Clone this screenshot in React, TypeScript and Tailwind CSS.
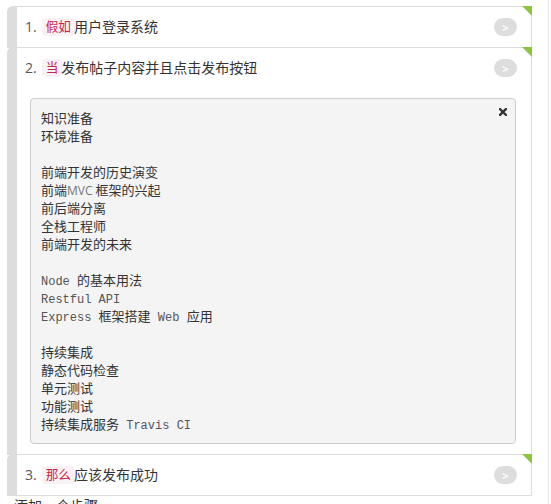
const Badge = ({ children }: { children: React.ReactNode }): JSX.Element => (
    <span className="inline-block px-[4px] rounded-[4px] bg-[#f9f2f4] text-[#c7254e] text-[12.6px] leading-[18px]">
        {children}
    </span>
);

const Corner = (): JSX.Element => (
    <svg className="absolute -top-px -right-px" width="10" height="10" viewBox="0 0 10 10">
        <polygon points="0,0 10,0 10,10" fill="#8cc63f" />
    </svg>
);

const Next = (): JSX.Element => (
    <span className="ml-auto flex items-center justify-center w-[23px] h-[18px] rounded-full bg-[#dddddd] text-white text-[11px] font-bold leading-none">
        &gt;
    </span>
);

const Mono = ({ children }: { children: React.ReactNode }): JSX.Element => (
    <span className="text-[12px] leading-[18px] text-[#555]" style={{ fontFamily: '"Liberation Mono", monospace' }}>{children}</span>
);

// each line of the pre block keeps a fixed 18px height, mixed fonts would grow it otherwise
const Line = ({ children }: { children?: React.ReactNode }): JSX.Element => (
    <div className="h-[18px] leading-[18px] whitespace-pre overflow-visible">{children ?? ' '}</div>
);

type Step = { n: number; kw: string; text: string };

const Row = ({ step }: { step: Step }): JSX.Element => (
    <div className="flex items-center h-[40px] pl-[8px] pr-[14px] text-[14px] leading-[20px]">
        <span className="text-[#555] mr-[5px]">{step.n}.</span>
        <Badge>{step.kw}</Badge>
        <span className="text-[#333] -ml-px">{step.text}</span>
        <Next />
    </div>
);

const App = (): JSX.Element => {
    const steps: Step[] = [
        { n: 1, kw: '假如', text: '用户登录系统' },
        { n: 2, kw: '当', text: '发布帖子内容并且点击发布按钮' },
        { n: 3, kw: '那么', text: '应该发布成功' },
    ];

    return (
        <div
            className="w-[549px] h-[504px] overflow-hidden border-r border-[#e6e6e6] bg-white pt-[6px] pl-[7px]"
            style={{ fontFamily: '"Open Sans", "Noto Sans CJK SC", sans-serif' }}
        >
            <ol className="w-[525px]">
                <li className="relative bg-white border border-[#dddddd] border-l-[10px] rounded-tl-[6px]">
                    <Row step={steps[0]} />
                    <Corner />
                </li>
                <li className="relative -mt-px bg-white border border-[#dddddd] border-l-[10px] rounded-tl-[6px] pb-[10px]">
                    <Row step={steps[1]} />
                    <Corner />
                    <div
                        className="relative mt-[10px] ml-[13px] mr-[15px] px-[10px] py-[10px] bg-[#f4f4f4] border border-[#cccccc] rounded-[4px] text-[13px] leading-[18px] text-[#333]"
                        style={{ fontFamily: '"Noto Sans CJK SC", sans-serif' }}
                    >
                        <svg className="absolute top-[9px] right-[8px]" width="8" height="8" viewBox="0 0 8 8">
                            <path d="M1 1 L7 7 M7 1 L1 7" stroke="#333" strokeWidth="2.4" strokeLinecap="square" />
                        </svg>
                        <Line>知识准备</Line>
                        <Line>环境准备</Line>
                        <Line />
                        <Line>前端开发的历史演变</Line>
                        <Line>前端<span className="text-[12px] text-[#777]" style={{ fontFamily: '"Open Sans", sans-serif' }}>MVC</span> 框架的兴起</Line>
                        <Line>前后端分离</Line>
                        <Line>全栈工程师</Line>
                        <Line>前端开发的未来</Line>
                        <Line />
                        <Line><Mono>Node </Mono>的基本用法</Line>
                        <Line><Mono>Restful API</Mono></Line>
                        <Line><Mono>Express </Mono>框架搭建<Mono> Web </Mono>应用</Line>
                        <Line />
                        <Line>持续集成</Line>
                        <Line>静态代码检查</Line>
                        <Line>单元测试</Line>
                        <Line>功能测试</Line>
                        <Line>持续集成服务<Mono> Travis CI</Mono></Line>
                    </div>
                </li>
                <li className="relative -mt-px bg-white border border-[#dddddd] border-l-[10px] rounded-tl-[6px]">
                    <Row step={steps[2]} />
                    <Corner />
                </li>
            </ol>
            <div className="pl-[7px] text-[14px] leading-[20px] text-[#333]">添加一个步骤</div>
        </div>
    );
};

export default App;
